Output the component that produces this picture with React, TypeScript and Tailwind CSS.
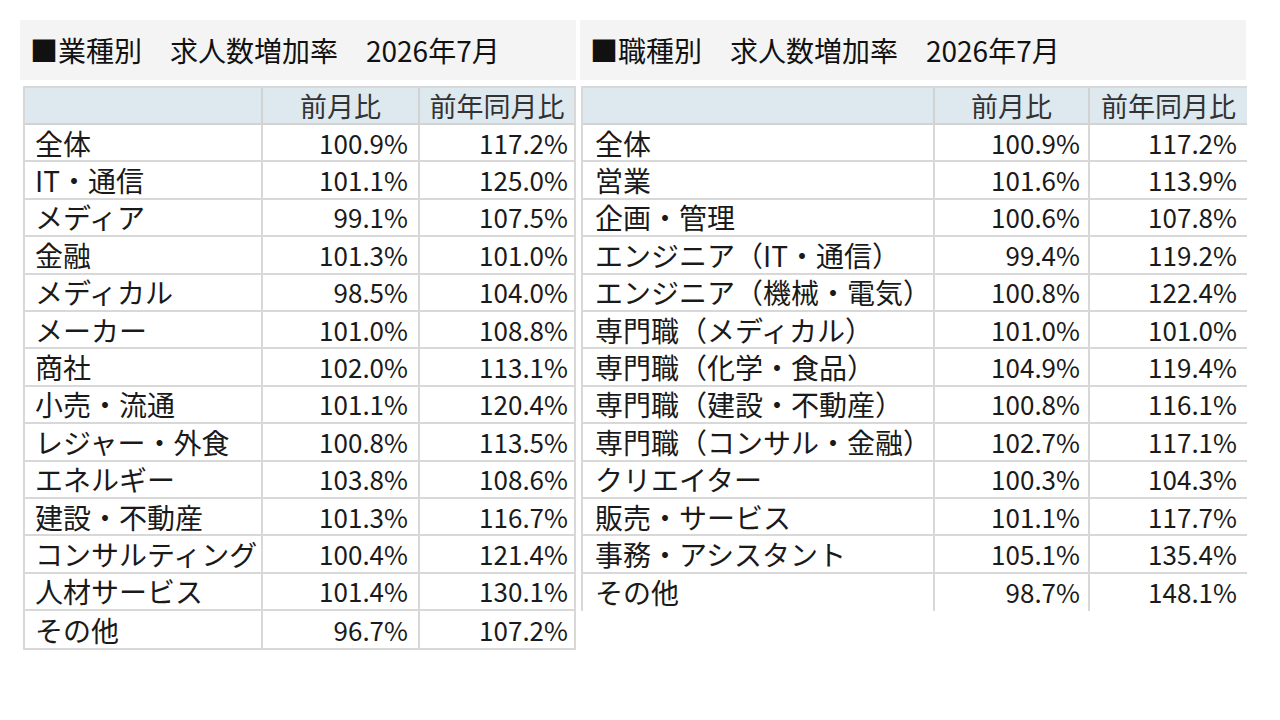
const industry: [string, string, string][] = [
  ['全体', '100.9%', '117.2%'],
  ['IT・通信', '101.1%', '125.0%'],
  ['メディア', '99.1%', '107.5%'],
  ['金融', '101.3%', '101.0%'],
  ['メディカル', '98.5%', '104.0%'],
  ['メーカー', '101.0%', '108.8%'],
  ['商社', '102.0%', '113.1%'],
  ['小売・流通', '101.1%', '120.4%'],
  ['レジャー・外食', '100.8%', '113.5%'],
  ['エネルギー', '103.8%', '108.6%'],
  ['建設・不動産', '101.3%', '116.7%'],
  ['コンサルティング', '100.4%', '121.4%'],
  ['人材サービス', '101.4%', '130.1%'],
  ['その他', '96.7%', '107.2%'],
];

const occupation: [string, string, string][] = [
  ['全体', '100.9%', '117.2%'],
  ['営業', '101.6%', '113.9%'],
  ['企画・管理', '100.6%', '107.8%'],
  ['エンジニア（IT・通信）', '99.4%', '119.2%'],
  ['エンジニア（機械・電気）', '100.8%', '122.4%'],
  ['専門職（メディカル）', '101.0%', '101.0%'],
  ['専門職（化学・食品）', '104.9%', '119.4%'],
  ['専門職（建設・不動産）', '100.8%', '116.1%'],
  ['専門職（コンサル・金融）', '102.7%', '117.1%'],
  ['クリエイター', '100.3%', '104.3%'],
  ['販売・サービス', '101.1%', '117.7%'],
  ['事務・アシスタント', '105.1%', '135.4%'],
  ['その他', '98.7%', '148.1%'],
];

const font = { fontFamily: '"Noto Sans CJK JP", "Noto Sans", sans-serif' };

function Title({ text, pad }: { text: string; pad: string }) {
  return (
    <div className={`h-[60px] bg-[#f4f4f4] flex items-center ${pad} text-[28px] leading-none text-[#111]`}>
      <span className="whitespace-pre">{text}</span>
    </div>
  );
}

export default function App() {
  return (
    <div className="w-[1280px] h-[720px] bg-white pt-5 pl-5 flex gap-1 text-[#1a1a1a] leading-none" style={font}>
      {/* 業種別 */}
      <div className="w-[556px] flex flex-col gap-[6px]">
        <Title text="■業種別　求人数増加率　2026年7月" pad="pl-[10px]" />
        <div className="ml-[3px] border-2 border-[#d8d8d8] w-[553px]">
          <div className="grid grid-cols-[238px_157px_154px] h-[37px] bg-[#dee9ef] text-[27px] text-[#333]">
            <div className="border-r-2 border-b-2 border-[#d2d2d2]" />
            <div className="border-r-2 border-b-2 border-[#d2d2d2] flex items-center justify-center">前月比</div>
            <div className="border-b-2 border-[#d2d2d2] flex items-center justify-center">前年同月比</div>
          </div>
          {industry.map(([label, mom, yoy], i) => (
            <div
              key={label}
              className={`grid grid-cols-[238px_157px_154px] h-[37.4px] ${i < industry.length - 1 ? 'border-b-2 border-[#d8d8d8]' : ''}`}
            >
              <div className="border-r-2 border-[#d8d8d8] flex items-center pl-[10px] text-[28px] whitespace-nowrap">{label}</div>
              <div className="border-r-2 border-[#d8d8d8] flex items-center justify-end pr-[10px] text-[26px]">{mom}</div>
              <div className="flex items-center justify-end pr-[6px] text-[26px]">{yoy}</div>
            </div>
          ))}
        </div>
      </div>

      {/* 職種別 */}
      <div className="w-[666px] flex flex-col gap-[6px]">
        <Title text="■職種別　求人数増加率　2026年7月" pad="pl-[10px]" />
        <div className="ml-[1px] border-l-2 border-t-2 border-[#d8d8d8] w-[666px]">
          <div className="grid grid-cols-[352px_155px_157px] h-[37px] bg-[#dee9ef] text-[27px] text-[#333]">
            <div className="border-r-2 border-b-2 border-[#d2d2d2]" />
            <div className="border-r-2 border-b-2 border-[#d2d2d2] flex items-center justify-center">前月比</div>
            <div className="border-b-2 border-[#d2d2d2] flex items-center justify-center">前年同月比</div>
          </div>
          {occupation.map(([label, mom, yoy], i) => (
            <div
              key={label}
              className={`grid grid-cols-[352px_155px_157px] h-[37.4px] ${i < occupation.length - 1 ? 'border-b-2 border-[#d8d8d8]' : ''}`}
            >
              <div className="border-r-2 border-[#d8d8d8] flex items-center pl-[12px] text-[28px] whitespace-nowrap">{label}</div>
              <div className="border-r-2 border-[#d8d8d8] flex items-center justify-end pr-[8px] text-[26px]">{mom}</div>
              <div className="flex items-center justify-end pr-[10px] text-[26px]">{yoy}</div>
            </div>
          ))}
        </div>
      </div>
    </div>
  );
}
